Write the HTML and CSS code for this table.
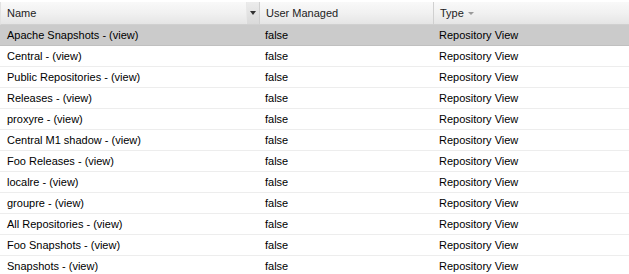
FILE: index.html
```html
<!DOCTYPE html>
<html lang="en">
<head>
    <meta charset="UTF-8">
    <title>Repositories</title>
    <link rel="stylesheet" href="styles.css">
</head>
<body>
    <div class="grid">
        <div class="grid-header">
            <div class="hd-cell col-name">
                <span>Name</span>
                <span class="hd-trigger"></span>
            </div>
            <div class="hd-cell col-managed"><span>User Managed</span></div>
            <div class="hd-cell col-type"><span>Type</span><span class="sort-arrow"></span></div>
        </div>

        <div class="grid-body">
            <div class="row selected"><div class="cell col-name">Apache Snapshots - (view)</div><div class="cell col-managed">false</div><div class="cell col-type">Repository View</div></div>
            <div class="row"><div class="cell col-name">Central - (view)</div><div class="cell col-managed">false</div><div class="cell col-type">Repository View</div></div>
            <div class="row"><div class="cell col-name">Public Repositories - (view)</div><div class="cell col-managed">false</div><div class="cell col-type">Repository View</div></div>
            <div class="row"><div class="cell col-name">Releases - (view)</div><div class="cell col-managed">false</div><div class="cell col-type">Repository View</div></div>
            <div class="row"><div class="cell col-name">proxyre - (view)</div><div class="cell col-managed">false</div><div class="cell col-type">Repository View</div></div>
            <div class="row"><div class="cell col-name">Central M1 shadow - (view)</div><div class="cell col-managed">false</div><div class="cell col-type">Repository View</div></div>
            <div class="row"><div class="cell col-name">Foo Releases - (view)</div><div class="cell col-managed">false</div><div class="cell col-type">Repository View</div></div>
            <div class="row"><div class="cell col-name">localre - (view)</div><div class="cell col-managed">false</div><div class="cell col-type">Repository View</div></div>
            <div class="row"><div class="cell col-name">groupre - (view)</div><div class="cell col-managed">false</div><div class="cell col-type">Repository View</div></div>
            <div class="row"><div class="cell col-name">All Repositories - (view)</div><div class="cell col-managed">false</div><div class="cell col-type">Repository View</div></div>
            <div class="row"><div class="cell col-name">Foo Snapshots - (view)</div><div class="cell col-managed">false</div><div class="cell col-type">Repository View</div></div>
            <div class="row"><div class="cell col-name">Snapshots - (view)</div><div class="cell col-managed">false</div><div class="cell col-type">Repository View</div></div>
        </div>
    </div>
</body>
</html>
```
FILE: styles.css
```css
* {
    margin: 0;
    padding: 0;
    box-sizing: border-box;
}

body {
    font-family: "Liberation Sans", Arial, sans-serif;
    font-size: 11px;
    color: #000;
    background: #fff;
    overflow: hidden;
}

.grid {
    width: 629px;
    padding-top: 2px;
}

.grid-header,
.row {
    display: grid;
    grid-template-columns: 259px 174px 1fr;
}

.grid-header {
    height: 23px;
    background: linear-gradient(to bottom, #f9f9f9 0%, #f1f1f1 50%, #e5e5e5 100%);
    border-bottom: 1px solid #d0d0d0;
    border-left: 1px solid #e2e2e2;
}

.hd-cell {
    display: flex;
    align-items: center;
    padding-left: 6px;
    border-right: 1px solid #d0d0d0;
    color: #222;
    position: relative;
}

.hd-cell.col-type {
    border-right: none;
}

.hd-trigger {
    position: absolute;
    right: 0;
    top: 0;
    bottom: 0;
    width: 13px;
    background: linear-gradient(to bottom, #ececec, #dadada);
    border-left: 1px solid #e8e8e8;
}

.hd-trigger::after {
    content: "";
    position: absolute;
    left: 3px;
    top: 9px;
    border-left: 3px solid transparent;
    border-right: 3px solid transparent;
    border-top: 4px solid #333;
}

.sort-arrow {
    margin-left: 4px;
    margin-top: 1px;
    border-left: 3px solid transparent;
    border-right: 3px solid transparent;
    border-top: 3px solid #9a9a9a;
}

.row {
    height: 21px;
    border-bottom: 1px solid #ededed;
}

.row.selected {
    background: #cbcbcb;
    border-bottom-color: #c0c0c0;
}

.cell {
    display: flex;
    align-items: center;
    padding-left: 7px;
    white-space: nowrap;
    overflow: hidden;
}

.cell.col-managed {
    padding-left: 6px;
}

.cell.col-type {
    padding-left: 6px;
}
```
